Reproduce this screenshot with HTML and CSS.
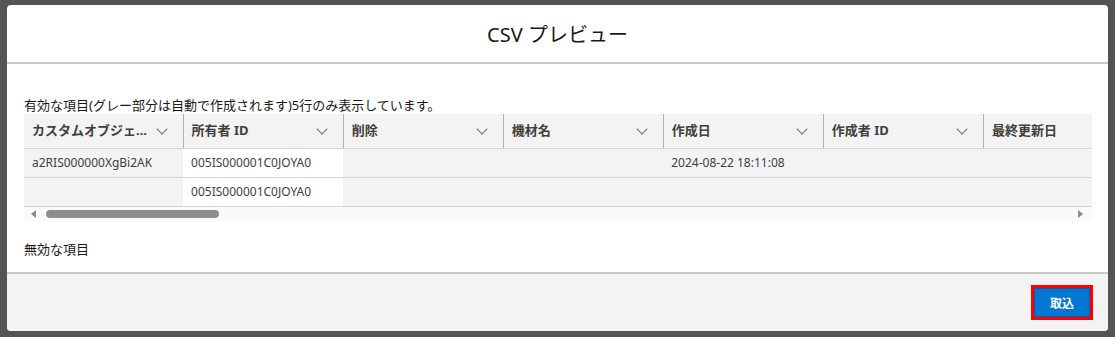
FILE: index.html
```html
<!DOCTYPE html>
<html lang="ja">

<head>
    <meta charset="UTF-8">
    <title>CSV プレビュー</title>
    <link rel="stylesheet" href="styles.css">
</head>

<body>
    <section class="modal">
        <header class="modal-head">
            <h2>CSV プレビュー</h2>
        </header>

        <div class="modal-body">
            <p class="note">有効な項目(グレー部分は自動で作成されます)5行のみ表示しています。</p>

            <div class="grid">
                <table>
                    <thead>
                        <tr>
                            <th><span class="lbl">カスタムオブジェ...</span><span class="chev"></span></th>
                            <th><span class="lbl">所有者 ID</span><span class="chev"></span></th>
                            <th><span class="lbl">削除</span><span class="chev"></span></th>
                            <th><span class="lbl">機材名</span><span class="chev"></span></th>
                            <th><span class="lbl">作成日</span><span class="chev"></span></th>
                            <th><span class="lbl">作成者 ID</span><span class="chev"></span></th>
                            <th><span class="lbl">最終更新日</span><span class="chev"></span></th>
                        </tr>
                    </thead>
                    <tbody>
                        <tr>
                            <td>a2RIS000000XgBi2AK</td>
                            <td class="edit">005IS000001C0JOYA0</td>
                            <td></td>
                            <td></td>
                            <td>2024-08-22 18:11:08</td>
                            <td></td>
                            <td></td>
                        </tr>
                        <tr>
                            <td></td>
                            <td class="edit">005IS000001C0JOYA0</td>
                            <td></td>
                            <td></td>
                            <td></td>
                            <td></td>
                            <td></td>
                        </tr>
                    </tbody>
                </table>

                <div class="hscroll">
                    <span class="arrow left"></span>
                    <div class="track"><div class="thumb"></div></div>
                    <span class="arrow right"></span>
                </div>
            </div>

            <p class="note invalid">無効な項目</p>
        </div>

        <footer class="modal-foot">
            <button class="import">取込</button>
        </footer>
    </section>
</body>

</html>
```

FILE: styles.css
```css
body {
    margin: 0;
    background: #545454;
    font-family: "Noto Sans", "Noto Sans CJK JP", sans-serif;
    color: #181818;
}

.modal {
    width: 1101px;
    height: 326px;
    margin: 5px 0 0 7px;
    background: #fff;
    border-radius: 4px;
    display: flex;
    flex-direction: column;
    overflow: hidden;
}

.modal-head {
    height: 57px;
    border-bottom: 2px solid #c9c9c9;
    display: flex;
    align-items: center;
    justify-content: center;
}

.modal-head h2 {
    margin: 0;
    font-size: 20px;
    font-weight: normal;
}

.modal-body {
    flex: 1;
    padding: 32px 16px 0 17px;
}

.note {
    margin: 0;
    font-size: 13px;
    line-height: 18px;
}

.note.invalid {
    margin-top: 18px;
}

.grid {
    width: 1068px;
    overflow: hidden;
}

table {
    border-collapse: collapse;
    table-layout: fixed;
    width: 1120px;
    font-size: 12px;
    color: #3e3e3c;
}

th,
td {
    width: 160px;
    box-sizing: border-box;
    background: #f3f3f3;
    text-align: left;
    padding: 0 8px;
    white-space: nowrap;
}

th {
    height: 34px;
    border-bottom: 1px solid #d4d4d4;
    border-right: 1px solid #b0b0b0;
    font-size: 13px;
    font-weight: bold;
    position: relative;
}

th:first-child {
    width: 159px;
}

.lbl {
    display: block;
    padding-bottom: 2px;
}

.chev {
    position: absolute;
    right: 17px;
    top: 11px;
    width: 7px;
    height: 7px;
    border-right: 1.3px solid #747474;
    border-bottom: 1.3px solid #747474;
    transform: rotate(45deg);
}

td {
    height: 29px;
    border-bottom: 1px solid #d4d4d4;
}

td.edit {
    background: #fff;
}

.hscroll {
    height: 15px;
    background: #fafafa;
    display: flex;
    align-items: center;
}

.arrow {
    width: 0;
    height: 0;
    border-top: 4px solid transparent;
    border-bottom: 4px solid transparent;
}

.arrow.left {
    margin: 0 10px 0 7px;
    border-right: 5px solid #8a8a8a;
}

.arrow.right {
    margin: 0 9px 0 6px;
    border-left: 5px solid #8a8a8a;
}

.track {
    flex: 1;
}

.thumb {
    width: 173px;
    height: 8px;
    border-radius: 4px;
    background: #8e8e8e;
}

.modal-foot {
    height: 57px;
    border-top: 2px solid #c9c9c9;
    background: #f3f3f3;
    display: flex;
    align-items: center;
    justify-content: flex-end;
    padding-right: 15px;
}

.import {
    width: 62px;
    height: 35px;
    border: 3px solid #ff0000;
    background: #0176d3;
    box-shadow: inset 0 0 0 1px #0b5cab;
    color: #fff;
    font-family: "Noto Sans CJK JP", sans-serif;
    font-size: 12px;
    font-weight: bold;
    padding: 0;
}
```
